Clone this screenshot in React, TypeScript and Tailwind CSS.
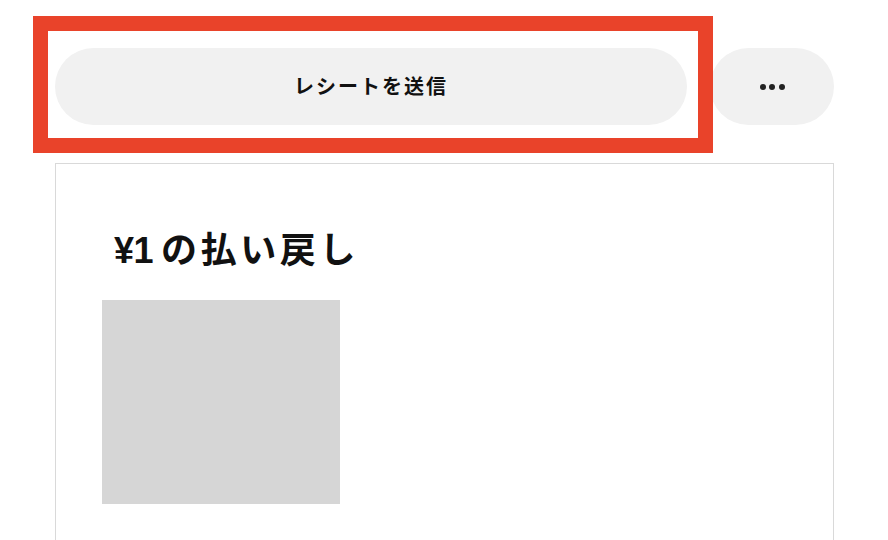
export default function App() {
  return (
    <div
      className="relative w-[888px] h-[540px] overflow-hidden bg-white text-[#1a1a1a]"
      style={{ fontFamily: '"Liberation Sans", "Noto Sans CJK JP", sans-serif' }}
    >
      <div className="pl-[55px] pt-[48px]">
        {/* Action row */}
        <div className="flex gap-[23px]">
          <button className="w-[632px] h-[77px] rounded-full bg-[#f1f1f1] flex items-center justify-center text-[20px] font-bold tracking-[2px] text-[#111]">
            レシートを送信
          </button>
          <button className="w-[124px] h-[77px] rounded-full bg-[#f1f1f1] flex items-center justify-center gap-[3.5px]">
            <span className="w-[6px] h-[6px] rounded-full bg-[#222]" />
            <span className="w-[6px] h-[6px] rounded-full bg-[#222]" />
            <span className="w-[6px] h-[6px] rounded-full bg-[#222]" />
          </button>
        </div>

        {/* Refund card */}
        <div className="mt-[38px] w-[779px] h-[400px] border border-[#d9d9d9] pl-[46px] pt-[67px]">
          <h2 className="ml-[12px] text-[36px] leading-[40px] font-bold tracking-[3.6px] text-[#111]">
            <span className="tracking-[-0.5px] mr-[8px]">¥1</span>の払い戻し
          </h2>
          <div className="mt-[29px] w-[238px] h-[204px] bg-[#d6d6d6]" />
        </div>
      </div>

      {/* Highlight frame */}
      <div className="absolute left-[33px] top-[16px] w-[680px] h-[137px] border-[15px] border-[#e9432a]" />
    </div>
  );
}
